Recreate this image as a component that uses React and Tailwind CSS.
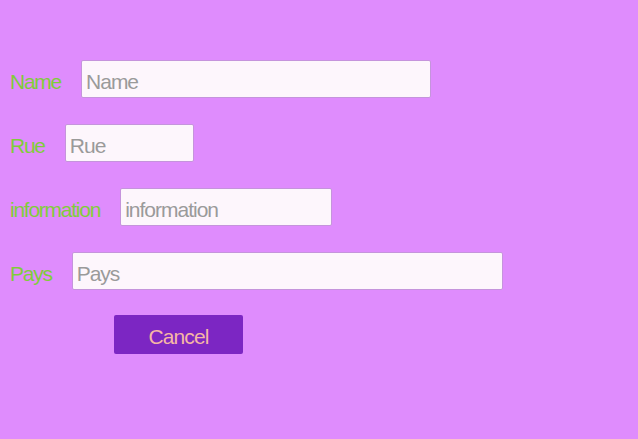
export default function App() {
  const rows = [
    { label: 'Name', w: 'w-[350px]' },
    { label: 'Rue', w: 'w-[129px]' },
    { label: 'information', w: 'w-[212px]' },
    { label: 'Pays', w: 'w-[431px]' },
  ];
  return (
    <div className="min-h-[439px] w-full bg-[#df8cfd] pt-[60px] pl-[10px] font-['Liberation_Sans',Arial,sans-serif]">
      <div className="flex flex-col gap-[26px]">
        {rows.map((r) => (
          <div key={r.label} className="flex items-center gap-[20px]">
            <span className="text-[21px] text-[#80cc3a] tracking-[-1.25px] pt-[6px]">{r.label}</span>
            <input
              placeholder={r.label}
              className={`${r.w} h-[38px] rounded-[2px] bg-[#fdf6fc] border border-[#c594dc] px-[4px] pt-[6px] text-[21px] tracking-[-1px] text-[#555] placeholder:text-[#9a9a9a] outline-none`}
            />
          </div>
        ))}
      </div>
      <button className="mt-[25px] ml-[104px] w-[129px] h-[39px] rounded-[2px] bg-[#7c26c3] pt-[5px] text-[21px] tracking-[-0.9px] text-[#f6b7a5]">
        Cancel
      </button>
    </div>
  );
}
